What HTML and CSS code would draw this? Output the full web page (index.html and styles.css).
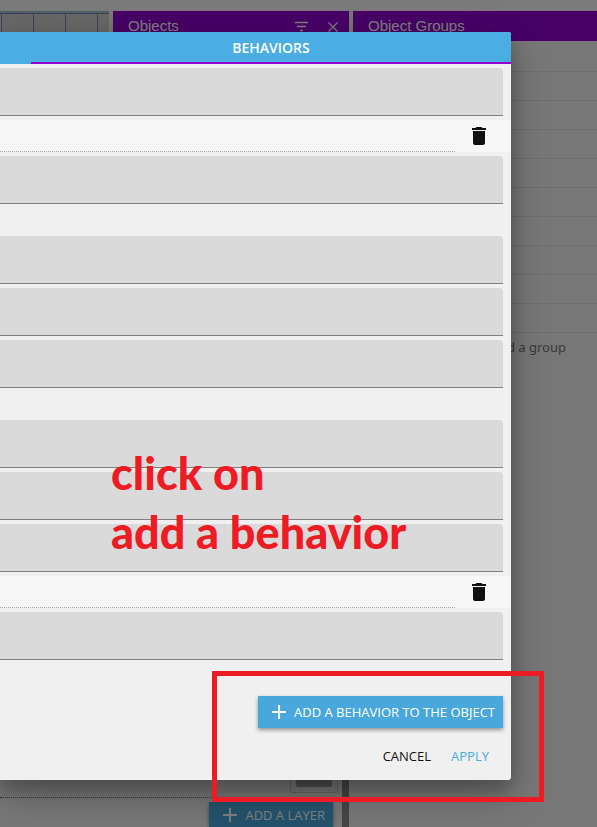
FILE: index.html
```html
<!DOCTYPE html>
<html lang="en">
<head>
    <meta charset="UTF-8">
    <meta name="viewport" content="width=device-width, initial-scale=1.0">
    <title>Object Behaviors</title>
    <link rel="stylesheet" href="styles.css">
</head>
<body>
    <div class="editor">
        <div class="toolbar"></div>
        <div class="workspace">
            <div class="main-column">
                <div class="main-row">
                    <div class="scene"></div>
                    <section class="panel objects-panel">
                        <header class="panel-header">
                            <h2>Objects</h2>
                            <button type="button" class="icon-button" aria-label="Filter">
                                <svg width="16" height="16" viewBox="0 0 16 16"><path d="M2 4.5h13M4 8.5h9M7 12.5h3" stroke="currentColor" stroke-width="1.5" fill="none"/></svg>
                            </button>
                            <button type="button" class="icon-button" aria-label="Close">
                                <svg width="16" height="16" viewBox="0 0 16 16"><path d="M3.500 4.500l9 9M12.500 4.500l-9 9" stroke="currentColor" stroke-width="1.200" fill="none"/></svg>
                            </button>
                        </header>
                    </section>
                </div>
                <section class="layers-panel">
                    <div class="layer-row">
                        <span class="layer-line"></span>
                        <span class="layer-preview"><span class="layer-thumb"></span></span>
                    </div>
                    <button type="button" class="raised-button layer-button">
                        <svg width="16" height="16" viewBox="0 0 16 16"><path d="M8 1v14M1 8h14" stroke="currentColor" stroke-width="2" fill="none"/></svg>
                        <span>ADD A LAYER</span>
                    </button>
                </section>
            </div>
            <section class="panel groups-panel">
                <header class="panel-header">
                    <h2>Object Groups</h2>
                </header>
                <ul class="group-list">
                    <li></li>
                    <li></li>
                    <li></li>
                    <li></li>
                    <li></li>
                    <li></li>
                    <li></li>
                    <li></li>
                    <li></li>
                    <li></li>
                </ul>
                <button type="button" class="add-group">Click to add a group</button>
            </section>
        </div>
    </div>

    <div class="overlay">
        <div class="dialog" role="dialog" aria-label="Behaviors">
            <div class="tabs">
                <button type="button" class="tab">BEHAVIORS</button>
            </div>
            <form class="behaviors">
                <div class="group">
                    <input type="text" class="field" aria-label="Behavior property">
                </div>
                <div class="behavior-title">
                    <input type="text" class="name-input" aria-label="Behavior name">
                    <button type="button" class="delete-button" aria-label="Delete behavior">
                        <svg width="24" height="24" viewBox="0 0 24 24"><path d="M6 19c0 1.100.9 2 2 2h8c1.100 0 2-.9 2-2V7H6v12zM19 4h-3.500l-1-1h-5l-1 1H5v2h14V4z" fill="currentColor"/></svg>
                    </button>
                </div>
                <div class="group spaced">
                    <input type="text" class="field" aria-label="Behavior property">
                </div>
                <div class="group spaced">
                    <input type="text" class="field" aria-label="Behavior property">
                    <input type="text" class="field" aria-label="Behavior property">
                    <input type="text" class="field" aria-label="Behavior property">
                </div>
                <div class="group">
                    <input type="text" class="field" aria-label="Behavior property">
                    <input type="text" class="field" aria-label="Behavior property">
                    <input type="text" class="field" aria-label="Behavior property">
                </div>
                <div class="behavior-title">
                    <input type="text" class="name-input" aria-label="Behavior name">
                    <button type="button" class="delete-button" aria-label="Delete behavior">
                        <svg width="24" height="24" viewBox="0 0 24 24"><path d="M6 19c0 1.100.9 2 2 2h8c1.100 0 2-.9 2-2V7H6v12zM19 4h-3.500l-1-1h-5l-1 1H5v2h14V4z" fill="currentColor"/></svg>
                    </button>
                </div>
                <div class="group">
                    <input type="text" class="field" aria-label="Behavior property">
                </div>
                <div class="add-row">
                    <button type="button" class="raised-button">
                        <svg width="16" height="16" viewBox="0 0 16 16"><path d="M8 1v14M1 8h14" stroke="currentColor" stroke-width="2" fill="none"/></svg>
                        <span>ADD A BEHAVIOR TO THE OBJECT</span>
                    </button>
                </div>
                <div class="actions">
                    <button type="button" class="flat-button">CANCEL</button>
                    <button type="submit" class="flat-button primary">APPLY</button>
                </div>
            </form>
        </div>
    </div>

    <p class="note">click on<br>add a behavior</p>
    <div class="highlight"></div>
</body>
</html>
```

FILE: styles.css
```css
* {
    box-sizing: border-box;
}
body {
    margin: 0;
    position: relative;
    height: 100vh;
    overflow: hidden;
    font-family: "Open Sans", "Noto Sans", sans-serif;
    font-size: 13px;
    color: #111;
}
button, input {
    font: inherit;
    color: inherit;
    border: none;
    background: none;
    padding: 0;
    margin: 0;
}
button {
    cursor: pointer;
}
svg {
    display: block;
    flex: none;
}

/* editor behind the dialog */
.editor {
    display: flex;
    flex-direction: column;
    height: 100%;
    background: #f0f0f0;
}
.toolbar {
    height: 11px;
    background: #f6f6f6;
}
.workspace {
    display: flex;
    flex: 1;
    gap: 4px;
}
.main-column {
    display: flex;
    flex-direction: column;
    flex: 1;
}
.main-row {
    display: flex;
    flex: 1;
    gap: 4px;
}
.scene {
    flex: 1;
    border-top: 2px solid #a0c0d0;
    background: repeating-linear-gradient(90deg, #d0d0d0 0 1px, #8282c0 1px 2px, #d0d0d0 2px 32px);
    box-shadow: inset 0 1px #7880b8;
}
.panel {
    background: #f0f0f0;
}
.objects-panel {
    width: 236px;
}
.groups-panel {
    width: 244px;
}
.panel-header {
    display: flex;
    align-items: center;
    gap: 16px;
    height: 30px;
    padding: 0 8px 1px 15px;
    background: #9100ce;
    color: #fff;
}
.panel-header h2 {
    flex: 1;
    margin: 0;
    font-family: "Liberation Sans", Arial, sans-serif;
    font-size: 15px;
    font-weight: normal;
}
.group-list {
    list-style: none;
    margin: 0;
    padding: 2px 0 0;
}
.group-list li {
    height: 29px;
    border-bottom: 1px solid #dedede;
}
.add-group {
    display: block;
    margin: 0 31px 0 auto;
    height: 28px;
    font-family: "Noto Sans", sans-serif;
    color: #777;
}
.layers-panel {
    display: flex;
    flex-direction: column;
    align-items: flex-end;
    gap: 4px;
    height: 80px;
    border-right: 7px solid #8c8c8c;
}
.layer-row {
    display: flex;
    align-items: flex-end;
    width: 100%;
    height: 51px;
    gap: 4px;
    padding-right: 4px;
}
.layer-line {
    flex: 1;
    border-bottom: 1px dotted #777;
}
.layer-preview {
    width: 48px;
    height: 46px;
    margin-bottom: 5px;
    padding: 5px;
    border: 1px solid #c8c8c8;
    border-radius: 2px;
}
.layer-thumb {
    display: block;
    height: 100%;
    border-radius: 2px;
    background: #a0a0a0;
}

/* dialog */
.overlay {
    position: absolute;
    inset: 0;
    padding: 32px 86px 0 0;
    background: rgba(0, 0, 0, 0.5);
}
.dialog {
    background: #f0f0f0;
    border-radius: 0 3px 3px 0;
    box-shadow: 0 14px 45px rgba(0, 0, 0, 0.25), 0 10px 18px rgba(0, 0, 0, 0.22);
}
.tabs {
    display: flex;
    height: 32px;
    padding-left: 31px;
    background: #4aaee3;
    border-radius: 0 3px 0 0;
}
.tab {
    flex: 1;
    border-bottom: 2px solid #9100ce;
    color: #fff;
    font-size: 14px;
    font-weight: 600;
}
.behaviors {
    display: flex;
    flex-direction: column;
    gap: 4px;
    padding-top: 4px;
}
.group {
    display: flex;
    flex-direction: column;
    gap: 4px;
    padding-right: 8px;
}
.group.spaced {
    margin-bottom: 28px;
}
.field {
    width: 100%;
    height: 48px;
    padding: 0 8px;
    background: #dadada;
    border-bottom: 1px solid #808080;
    border-radius: 0 4px 0 0;
}
.behavior-title {
    display: flex;
    align-items: center;
    gap: 12px;
    height: 32px;
    padding-right: 20px;
    background: #f7f7f7;
}
.name-input {
    flex: 1;
    height: 32px;
    border-bottom: 1px dotted #aaa;
}
.delete-button {
    color: #111;
}
.add-row {
    display: flex;
    justify-content: flex-end;
    padding: 32px 8px 0 0;
}
.raised-button {
    display: flex;
    align-items: center;
    gap: 7px;
    height: 32px;
    padding: 0 8px 0 13px;
    background: #49a7db;
    color: #fff;
    font-weight: 500;
    box-shadow: 0 2px 4px rgba(0, 0, 0, 0.4);
}
.layer-button {
    margin-right: 9px;
}
.actions {
    display: flex;
    justify-content: flex-end;
    gap: 20px;
    padding: 8px 22px 8px 0;
}
.flat-button {
    height: 32px;
}
.flat-button.primary {
    color: #4aaee3;
}

/* annotations drawn over everything */
.note {
    position: absolute;
    left: 111px;
    top: 444px;
    margin: 0;
    color: #ed1c24;
    font-family: Lato, sans-serif;
    font-size: 45px;
    font-weight: 900;
    line-height: 59px;
    white-space: nowrap;
}
.highlight {
    position: absolute;
    left: 212px;
    right: 53px;
    top: 671px;
    height: 131px;
    border: 5px solid #ed1c24;
    pointer-events: none;
}
```
